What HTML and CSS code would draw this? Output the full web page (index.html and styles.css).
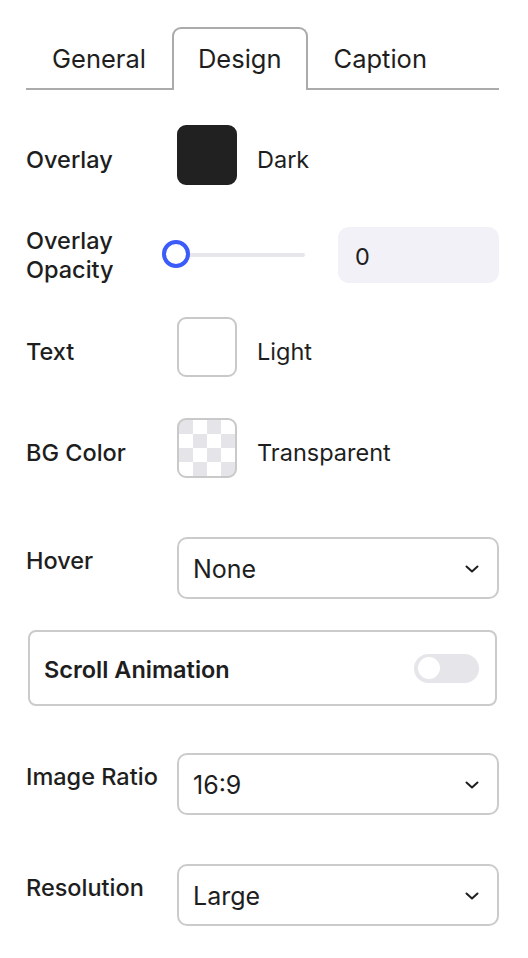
FILE: index.html
```html
<!DOCTYPE html>
<html>
<head>
<meta charset="utf-8">
<link rel="stylesheet" href="styles.css">
</head>
<body>
<div class="panel">
  <div class="tabs">
    <div class="tab">General</div>
    <div class="tab active">Design</div>
    <div class="tab">Caption</div>
  </div>

  <div class="row swatch-row r-overlay">
    <div class="label">Overlay</div>
    <div class="control">
      <span class="swatch dark"></span>
      <span class="value">Dark</span>
    </div>
  </div>

  <div class="row r-opacity">
    <div class="label two-line">Overlay<br>Opacity</div>
    <div class="control opacity">
      <div class="slider">
        <div class="track"></div>
        <div class="thumb"></div>
      </div>
      <div class="num">0</div>
    </div>
  </div>

  <div class="row swatch-row r-text">
    <div class="label">Text</div>
    <div class="control">
      <span class="swatch light"></span>
      <span class="value">Light</span>
    </div>
  </div>

  <div class="row swatch-row r-bg">
    <div class="label">BG Color</div>
    <div class="control">
      <span class="swatch checker"></span>
      <span class="value">Transparent</span>
    </div>
  </div>

  <div class="row select-row r-hover">
    <div class="label top">Hover</div>
    <div class="select">
      <span>None</span>
      <svg class="chev" width="14" height="8" viewBox="0 0 14 8"><path d="M1.5 1.5 L7 6.5 L12.5 1.5" fill="none" stroke="#1e1e1e" stroke-width="2" stroke-linecap="round" stroke-linejoin="round"/></svg>
    </div>
  </div>

  <div class="toggle-box">
    <span class="toggle-label">Scroll Animation</span>
    <span class="toggle"><span class="knob"></span></span>
  </div>

  <div class="row select-row r-ratio">
    <div class="label top">Image Ratio</div>
    <div class="select">
      <span>16:9</span>
      <svg class="chev" width="14" height="8" viewBox="0 0 14 8"><path d="M1.5 1.5 L7 6.5 L12.5 1.5" fill="none" stroke="#1e1e1e" stroke-width="2" stroke-linecap="round" stroke-linejoin="round"/></svg>
    </div>
  </div>

  <div class="row select-row r-res">
    <div class="label top">Resolution</div>
    <div class="select">
      <span>Large</span>
      <svg class="chev" width="14" height="8" viewBox="0 0 14 8"><path d="M1.5 1.5 L7 6.5 L12.5 1.5" fill="none" stroke="#1e1e1e" stroke-width="2" stroke-linecap="round" stroke-linejoin="round"/></svg>
    </div>
  </div>
</div>
</body>
</html>
```

FILE: styles.css
```css
* { box-sizing: border-box; }
html, body { margin: 0; padding: 0; background: #fff; }
body {
  font-family: Inter, "Noto Sans", "Liberation Sans", sans-serif;
  color: #1e1e1e;
}
.panel {
  width: 528px;
  padding: 27px 29px 0 26px;
}
.tabs {
  display: flex;
  border-bottom: 2px solid #ababab;
  height: 63px;
}
.tab {
  height: 63px;
  padding: 0 24px;
  border: 2px solid transparent;
  border-bottom: none;
  font-size: 25.5px;
  line-height: 59px;
  color: #1e1e1e;
}
.tab.active {
  border-color: #ababab;
  border-radius: 9px 9px 0 0;
  background: #fff;
  height: 63px;
  margin-bottom: -2px;
  padding: 0 24px;
}
.row {
  display: grid;
  grid-template-columns: 151px 1fr;
}
.label {
  font-size: 23.5px;
  font-weight: 500;
  line-height: 29px;
  white-space: nowrap;
}
.swatch-row { align-items: center; height: 60px; }
.swatch-row .label { padding-top: 9px; }
.control { display: flex; align-items: center; }
.swatch {
  width: 60px;
  height: 60px;
  border-radius: 9px;
  border: 2px solid #c9c9c9;
  flex: none;
}
.swatch.dark { background: #212121; border-color: #212121; }
.swatch.light { background: #fff; }
.swatch.checker {
  background-color: #fff;
  background-image: conic-gradient(#fff 25%, #e4e4e9 25% 50%, #fff 50% 75%, #e4e4e9 75%);
  background-size: 28px 28px;
  background-position: 0 0;
}
.value {
  margin-left: 20px;
  font-size: 23.5px;
  padding-top: 9px;
}
.r-overlay { margin-top: 35px; }
.r-opacity { margin-top: 42px; align-items: center; height: 56px; }
.r-opacity .label { margin: -1px 0; }
.opacity { height: 56px; }
.slider {
  position: relative;
  width: 143px;
  height: 28px;
  margin-left: -15px;
}
.track {
  position: absolute;
  left: 10px;
  right: 0;
  top: 12px;
  height: 4px;
  border-radius: 2px;
  background: #e6e6eb;
}
.thumb {
  position: absolute;
  left: 0;
  top: -1px;
  width: 28px;
  height: 28px;
  border-radius: 50%;
  border: 4px solid #3b5bfb;
  background: #fff;
}
.num {
  margin-left: auto;
  width: 161px;
  height: 56px;
  border-radius: 11px;
  background: #f1f1f7;
  font-size: 23.5px;
  line-height: 56px;
  padding-left: 17px;
  padding-top: 2px;
}
.r-text { margin-top: 34px; }
.r-bg { margin-top: 41px; }
.select-row .label { padding-top: 9px; }
.select {
  height: 62px;
  border: 2px solid #cbcbcb;
  border-radius: 10px;
  display: flex;
  align-items: center;
  justify-content: space-between;
  padding: 2px 18px 0 14px;
  font-size: 25px;
}
.chev { display: block; }
.r-hover { margin-top: 59px; }
.toggle-box {
  margin-top: 31px;
  margin-left: 2px;
  width: 469px;
  height: 76px;
  border: 2px solid #cbcbcb;
  border-radius: 8px;
  display: flex;
  align-items: center;
  justify-content: space-between;
  padding: 0 16px 0 14px;
}
.toggle-label {
  font-size: 23.5px;
  font-weight: 600;
  padding-top: 2px;
}
.toggle {
  width: 65px;
  height: 29px;
  border-radius: 15px;
  background: #e5e5ea;
  display: flex;
  align-items: center;
  padding-left: 4px;
}
.knob {
  width: 22px;
  height: 22px;
  border-radius: 50%;
  background: #fff;
}
.r-ratio { margin-top: 47px; }
.r-res { margin-top: 49px; }
```
